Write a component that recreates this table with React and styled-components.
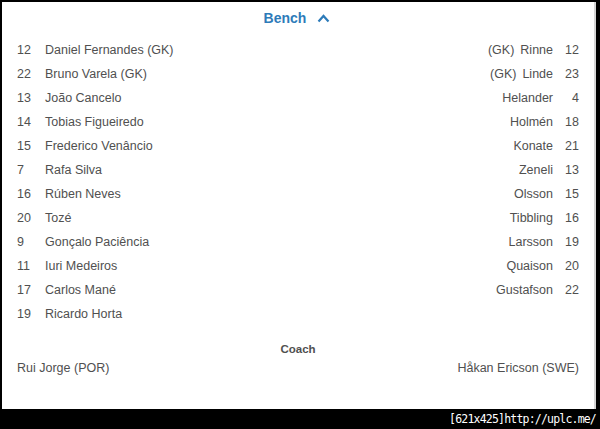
import React from "react";
import styled, { createGlobalStyle } from "styled-components";

const Global = createGlobalStyle`
  html, body { margin: 0; padding: 0; background: #000; }
  body { font-family: "Liberation Sans", Arial, sans-serif; }
`;

const Frame = styled.div`
  width: 600px;
  height: 429px;
  background: #000;
  display: flex;
  flex-direction: column;
  padding: 2px 4px 0 2px;
  box-sizing: border-box;
`;

const Panel = styled.div`
  height: 407px;
  background: #fff;
  border-right: 2px solid #d4d4d4;
  padding: 6px 15px 0 15px;
  box-sizing: border-box;
  color: #505050;
  font-size: 12.5px;
`;

const Header = styled.div`
  height: 20px;
  display: flex;
  align-items: center;
  justify-content: center;
  gap: 11px;
  margin-bottom: 10px;
  padding-right: 2px;
  color: #2d7bb9;
  font-weight: bold;
  font-size: 14px;
`;

const Columns = styled.div`
  display: grid;
  grid-template-columns: 1fr 1fr;
`;

const List = styled.div`
  display: flex;
  flex-direction: column;
`;

const Row = styled.div`
  height: 24px;
  display: flex;
  align-items: center;
  justify-content: ${(p) => (p.$right ? "flex-end" : "flex-start")};
`;

const Num = styled.span`
  width: ${(p) => (p.$right ? "22px" : "28px")};
  text-align: ${(p) => (p.$right ? "right" : "left")};
  margin-left: ${(p) => (p.$right ? "4px" : "0")};
`;

const Gk = styled.span`
  margin-right: 6px;
`;

const CoachLabel = styled.div`
  margin-top: 14px;
  height: 18px;
  line-height: 18px;
  text-align: center;
  font-weight: bold;
  font-size: 11.5px;
`;

const CoachRow = styled.div`
  height: 20px;
  display: flex;
  align-items: center;
  justify-content: space-between;
`;

const Footer = styled.div`
  height: 20px;
  display: flex;
  align-items: center;
  justify-content: flex-end;
  color: #fff;
  font-family: "DejaVu Sans Mono", monospace;
  font-size: 11.5px;
  letter-spacing: -0.8px;
`;

const left = [
  ["12", "Daniel Fernandes (GK)"],
  ["22", "Bruno Varela (GK)"],
  ["13", "João Cancelo"],
  ["14", "Tobias Figueiredo"],
  ["15", "Frederico Venâncio"],
  ["7", "Rafa Silva"],
  ["16", "Rúben Neves"],
  ["20", "Tozé"],
  ["9", "Gonçalo Paciência"],
  ["11", "Iuri Medeiros"],
  ["17", "Carlos Mané"],
  ["19", "Ricardo Horta"],
];

const right = [
  ["12", "Rinne", true],
  ["23", "Linde", true],
  ["4", "Helander"],
  ["18", "Holmén"],
  ["21", "Konate"],
  ["13", "Zeneli"],
  ["15", "Olsson"],
  ["16", "Tibbling"],
  ["19", "Larsson"],
  ["20", "Quaison"],
  ["22", "Gustafson"],
];

const Chevron = () => (
  <svg width="13" height="9" viewBox="0 0 13 9">
    <polyline points="1.5,7.5 6.5,2 11.5,7.5" fill="none" stroke="#2d7bb9" strokeWidth="2.2" />
  </svg>
);

export default function App() {
  return (
    <>
      <Global />
      <Frame>
        <Panel>
          <Header>
            <span>Bench</span>
            <Chevron />
          </Header>
          <Columns>
            <List>
              {left.map(([n, name]) => (
                <Row key={n + name}>
                  <Num>{n}</Num>
                  <span>{name}</span>
                </Row>
              ))}
            </List>
            <List>
              {right.map(([n, name, gk]) => (
                <Row $right key={n + name}>
                  {gk && <Gk>(GK)</Gk>}
                  <span>{name}</span>
                  <Num $right>{n}</Num>
                </Row>
              ))}
            </List>
          </Columns>
          <CoachLabel>Coach</CoachLabel>
          <CoachRow>
            <span>Rui Jorge (POR)</span>
            <span>Håkan Ericson (SWE)</span>
          </CoachRow>
        </Panel>
        <Footer>[621x425]http://uplc.me/</Footer>
      </Frame>
    </>
  );
}
